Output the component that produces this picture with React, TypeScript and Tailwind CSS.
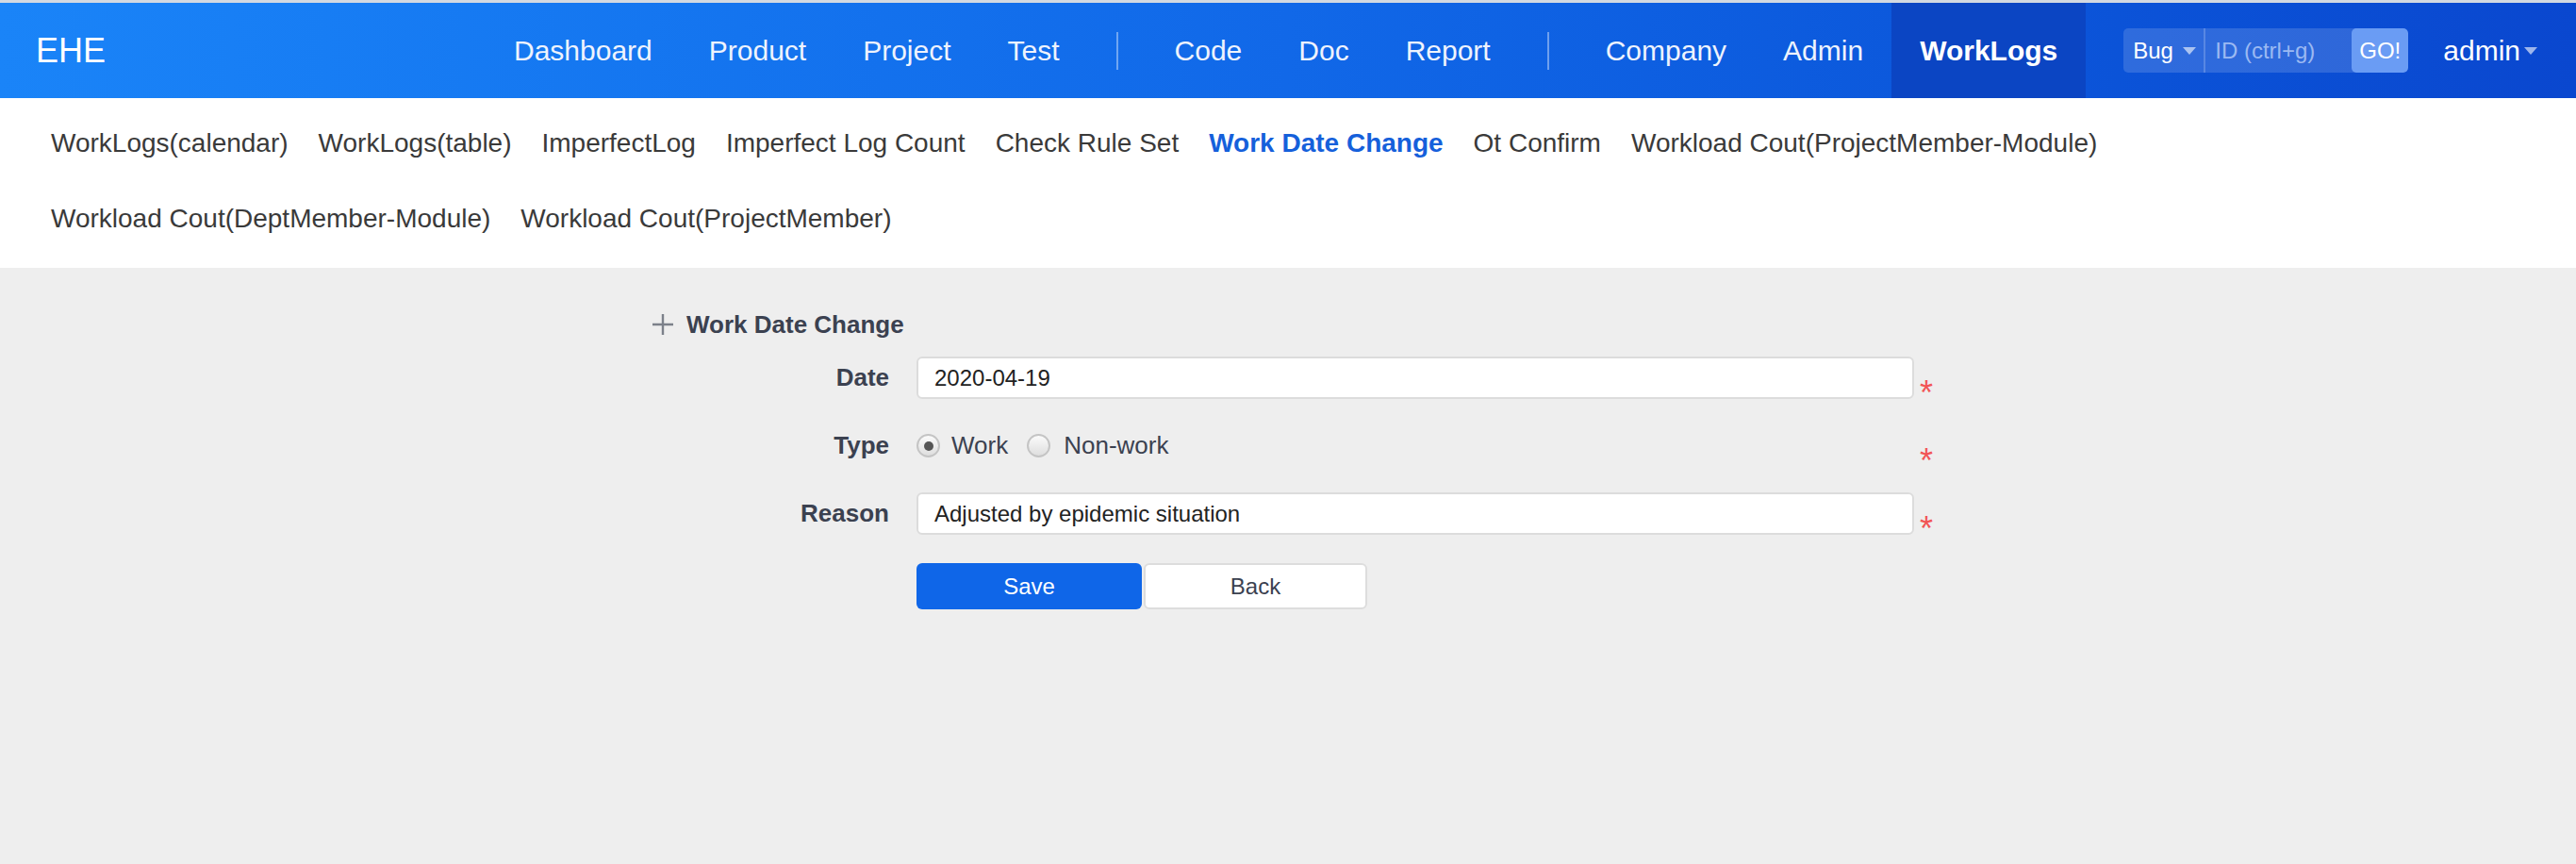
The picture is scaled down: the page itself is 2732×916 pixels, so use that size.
const font = { fontFamily: '"Liberation Sans", Arial, sans-serif' };

const mainNav: (string | null)[] = [
  "Dashboard",
  "Product",
  "Project",
  "Test",
  null,
  "Code",
  "Doc",
  "Report",
  null,
  "Company",
  "Admin",
];

const subNavRows: string[][] = [
  [
    "WorkLogs(calendar)",
    "WorkLogs(table)",
    "ImperfectLog",
    "Imperfect Log Count",
    "Check Rule Set",
    "Work Date Change",
    "Ot Confirm",
    "Workload Cout(ProjectMember-Module)",
  ],
  ["Workload Cout(DeptMember-Module)", "Workload Cout(ProjectMember)"],
];

const Caret = ({ className }: { className: string }) => (
  <svg width="14" height="8" viewBox="0 0 14 8" className={className}>
    <path d="M0 0 L14 0 L7 8 Z" fill="currentColor" />
  </svg>
);

const Header = () => {
  return (
    <div className="h-[104px] border-t-[3px] border-[#d3d9e1] bg-linear-to-r from-[#1a84f8] via-[#1168e8] to-[#0a47cf] flex items-stretch text-white">
      <div className="w-[515px] pl-[38px] flex items-center text-[36px]">EHE</div>
      <nav className="flex items-center">
        {mainNav.map((item, i) =>
          item === null ? (
            <span key={i} className="mx-[30px] w-[2px] h-[40px] bg-white/40" />
          ) : (
            <a key={i} className="px-[30px] text-[30px] text-[#eef3fd]">
              {item}
            </a>
          )
        )}
      </nav>
      <div className="flex items-center px-[30px] bg-[#0b45c3] text-[30px] font-bold">WorkLogs</div>
      <div className="flex items-center ml-[40px]">
        <div className="flex h-[47px] rounded-[5px] bg-white/15 overflow-hidden text-[24px]">
          <div className="w-[87px] flex items-center pl-[10px] gap-[10px] border-r-[2px] border-white/20">
            <span>Bug</span>
            <Caret className="text-white/60" />
          </div>
          <div className="w-[155px] flex items-center pl-[10px] text-[#9bb9f2]">ID (ctrl+g)</div>
          <div className="w-[60px] flex items-center justify-center bg-[#6a9cf4] rounded-[5px]">GO!</div>
        </div>
        <div className="ml-[37px] flex items-center gap-[4px] text-[30px]">
          <span>admin</span>
          <Caret className="text-white/60" />
        </div>
      </div>
    </div>
  );
};

const SubNav = () => {
  return (
    <div className="bg-white pl-[38px] pt-[8px] pb-[12px]">
      {subNavRows.map((row, r) => (
        <div key={r} className="flex h-[80px] items-center">
          {row.map((item) => (
            <a
              key={item}
              className={
                item === "Work Date Change"
                  ? "px-[16px] text-[28px] font-bold text-[#1560db]"
                  : "px-[16px] text-[28px] text-[#3a3a3a]"
              }
            >
              {item}
            </a>
          ))}
        </div>
      ))}
    </div>
  );
};

const Required = () => (
  <span className="ml-[6px] text-[36px] leading-none text-[#f25555] translate-y-[16px]">*</span>
);

const Radio = ({ checked }: { checked?: boolean }) => (
  <span className="w-[25px] h-[25px] rounded-full border-[2px] border-[#c4c4c4] bg-linear-to-b from-[#fbfbfb] to-[#dedede] flex items-center justify-center">
    {checked && <span className="w-[10px] h-[10px] rounded-full bg-[#555555]" />}
  </span>
);

const FormRow = ({ label, children }: { label: string; children: React.ReactNode }) => (
  <div className="flex items-center h-[45px]">
    <label className="w-[251px] shrink-0 text-right text-[26px] font-bold text-[#3b4150]">{label}</label>
    <div className="ml-[29px] shrink-0 flex items-center">{children}</div>
  </div>
);

const WorkDateForm = () => {
  return (
    <div className="w-[1348px] mx-auto pt-[44px]">
      <div className="flex items-center h-[32px] text-[#3b4150]">
        <svg width="22" height="22" viewBox="0 0 22 22" className="text-[#7c818a]">
          <path d="M11 0 V22 M0 11 H22" stroke="currentColor" strokeWidth="2.4" />
        </svg>
        <h2 className="ml-[14px] text-[26px] font-bold">Work Date Change</h2>
      </div>
      <div className="mt-[18px] flex flex-col gap-[27px]">
        <FormRow label="Date">
          <div className="w-[1058px] h-[45px] bg-white border-[2px] border-[#dcdcdc] rounded-[6px] flex items-center pl-[17px] text-[24px] text-[#222222]">
            2020-04-19
          </div>
          <Required />
        </FormRow>
        <FormRow label="Type">
          <div className="w-[1058px] flex items-center text-[26px] text-[#3b4150]">
            <Radio checked />
            <span className="ml-[12px]">Work</span>
            <span className="ml-[20px]">
              <Radio />
            </span>
            <span className="ml-[14px]">Non-work</span>
          </div>
          <Required />
        </FormRow>
        <FormRow label="Reason">
          <div className="w-[1058px] h-[45px] bg-white border-[2px] border-[#dcdcdc] rounded-[6px] flex items-center pl-[17px] text-[24px] text-[#222222]">
            Adjusted by epidemic situation
          </div>
          <Required />
        </FormRow>
      </div>
      <div className="mt-[30px] ml-[280px] flex gap-[2px] text-[24px]">
        <button className="w-[239px] h-[49px] rounded-[6px] bg-[#0f66e8] text-white">Save</button>
        <button className="w-[237px] h-[49px] rounded-[6px] bg-white border-[2px] border-[#dddddd] text-[#3b4150]">
          Back
        </button>
      </div>
    </div>
  );
};

export default function App() {
  return (
    <div className="min-h-screen flex flex-col bg-[#eeeeee]" style={font}>
      <Header />
      <SubNav />
      <div className="flex-1">
        <WorkDateForm />
      </div>
    </div>
  );
}
